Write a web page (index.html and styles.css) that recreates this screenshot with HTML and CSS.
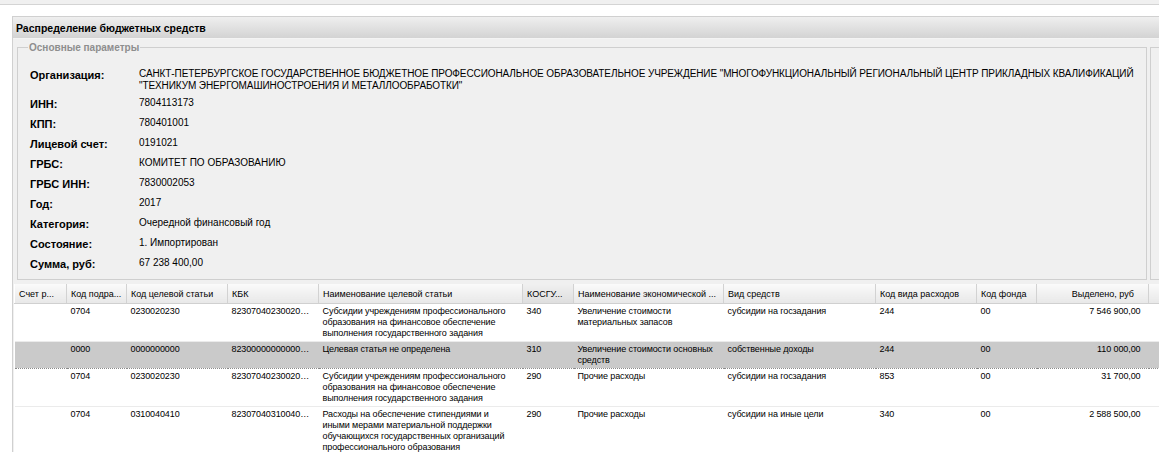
FILE: index.html
```html
<!DOCTYPE html>
<html lang="ru">

<head>
    <meta charset="UTF-8">
    <title>Распределение бюджетных средств</title>
    <link rel="stylesheet" href="styles.css">
</head>

<body>
    <div class="topbar"></div>
    <div class="workspace">
        <div class="panel">
            <div class="panel-header">Распределение бюджетных средств</div>
            <div class="panel-body">
                <div class="params">
                    <fieldset class="params-box">
                        <legend>Основные параметры</legend>
                        <div class="param param-wide">
                            <span class="param-label">Организация:</span>
                            <span class="param-value org-name">САНКТ-ПЕТЕРБУРГСКОЕ ГОСУДАРСТВЕННОЕ БЮДЖЕТНОЕ ПРОФЕССИОНАЛЬНОЕ ОБРАЗОВАТЕЛЬНОЕ УЧРЕЖДЕНИЕ "МНОГОФУНКЦИОНАЛЬНЫЙ РЕГИОНАЛЬНЫЙ ЦЕНТР ПРИКЛАДНЫХ КВАЛИФИКАЦИЙ<br>"ТЕХНИКУМ ЭНЕРГОМАШИНОСТРОЕНИЯ И МЕТАЛЛООБРАБОТКИ"</span>
                        </div>
                        <div class="param">
                            <span class="param-label">ИНН:</span>
                            <span class="param-value">7804113173</span>
                        </div>
                        <div class="param">
                            <span class="param-label">КПП:</span>
                            <span class="param-value">780401001</span>
                        </div>
                        <div class="param">
                            <span class="param-label">Лицевой счет:</span>
                            <span class="param-value">0191021</span>
                        </div>
                        <div class="param">
                            <span class="param-label">ГРБС:</span>
                            <span class="param-value">КОМИТЕТ ПО ОБРАЗОВАНИЮ</span>
                        </div>
                        <div class="param">
                            <span class="param-label">ГРБС ИНН:</span>
                            <span class="param-value">7830002053</span>
                        </div>
                        <div class="param">
                            <span class="param-label">Год:</span>
                            <span class="param-value">2017</span>
                        </div>
                        <div class="param">
                            <span class="param-label">Категория:</span>
                            <span class="param-value">Очередной финансовый год</span>
                        </div>
                        <div class="param">
                            <span class="param-label">Состояние:</span>
                            <span class="param-value">1. Импортирован</span>
                        </div>
                        <div class="param">
                            <span class="param-label">Сумма, руб:</span>
                            <span class="param-value">67 238 400,00</span>
                        </div>
                    </fieldset>
                    <div class="side-box"></div>
                </div>

                <table class="grid">
                    <colgroup>
                        <col style="width: 52px">
                        <col style="width: 60px">
                        <col style="width: 101px">
                        <col style="width: 91px">
                        <col style="width: 204px">
                        <col style="width: 51px">
                        <col style="width: 150px">
                        <col style="width: 152px">
                        <col style="width: 101px">
                        <col style="width: 60px">
                        <col style="width: 112px">
                        <col>
                    </colgroup>
                    <thead>
                        <tr>
                            <th>Счет р...</th>
                            <th>Код подра...</th>
                            <th>Код целевой статьи</th>
                            <th>КБК</th>
                            <th>Наименование целевой статьи</th>
                            <th class="sorted">КОСГУ...</th>
                            <th>Наименование экономической ...</th>
                            <th>Вид средств</th>
                            <th>Код вида расходов</th>
                            <th>Код фонда</th>
                            <th class="num">Выделено, руб</th>
                            <th></th>
                        </tr>
                    </thead>
                    <tbody>
                        <tr>
                            <td></td>
                            <td>0704</td>
                            <td>0230020230</td>
                            <td>82307040230020…</td>
                            <td>Субсидии учреждениям профессионального<br>образования на финансовое обеспечение<br>выполнения государственного задания</td>
                            <td>340</td>
                            <td>Увеличение стоимости<br>материальных запасов</td>
                            <td>субсидии на госзадания</td>
                            <td>244</td>
                            <td>00</td>
                            <td class="num">7 546 900,00</td>
                            <td></td>
                        </tr>
                        <tr class="selected">
                            <td></td>
                            <td>0000</td>
                            <td>0000000000</td>
                            <td>82300000000000…</td>
                            <td>Целевая статья не определена</td>
                            <td>310</td>
                            <td>Увеличение стоимости основных<br>средств</td>
                            <td>собственные доходы</td>
                            <td>244</td>
                            <td>00</td>
                            <td class="num">110 000,00</td>
                            <td></td>
                        </tr>
                        <tr>
                            <td></td>
                            <td>0704</td>
                            <td>0230020230</td>
                            <td>82307040230020…</td>
                            <td>Субсидии учреждениям профессионального<br>образования на финансовое обеспечение<br>выполнения государственного задания</td>
                            <td>290</td>
                            <td>Прочие расходы</td>
                            <td>субсидии на госзадания</td>
                            <td>853</td>
                            <td>00</td>
                            <td class="num">31 700,00</td>
                            <td></td>
                        </tr>
                        <tr>
                            <td></td>
                            <td>0704</td>
                            <td>0310040410</td>
                            <td>82307040310040…</td>
                            <td>Расходы на обеспечение стипендиями и<br>иными мерами материальной поддержки<br>обучающихся государственных организаций<br>профессионального образования</td>
                            <td>290</td>
                            <td>Прочие расходы</td>
                            <td>субсидии на иные цели</td>
                            <td>340</td>
                            <td>00</td>
                            <td class="num">2 588 500,00</td>
                            <td></td>
                        </tr>
                    </tbody>
                </table>
            </div>
        </div>
    </div>
</body>

</html>
```

FILE: styles.css
```css
body {
    margin: 0;
    background-color: #fff;
    font-family: "Liberation Sans", Arial, sans-serif;
    font-size: 11px;
    color: #000;
    overflow: hidden;
}

.topbar {
    height: 4px;
    background-color: #f0f0f0;
    border-bottom: 1px solid #d4d4d4;
}

.workspace {
    padding: 11px 0 0 12px;
}

.panel {
    border-top: 1px solid #d0d0d0;
    border-left: 1px solid #d0d0d0;
    background-color: #f0f0f0;
    height: 500px;
}

.panel-header {
    height: 21px;
    line-height: 22px;
    padding-left: 3px;
    font-size: 10.5px;
    font-weight: bold;
    background: linear-gradient(to bottom, #efefef, #d3d3d3);
    border-bottom: 1px solid #f4f4f4;
}

.panel-body {
    padding: 2px 0 0 0;
}

.params {
    display: flex;
    gap: 3px;
    margin-left: 4px;
}

.params-box {
    width: 1104px;
    margin: 0;
    padding: 12px 12px 6px 12px;
    border: 1px solid #cfcfcf;
    min-width: 0;
}

.params-box legend {
    margin-left: -2px;
    padding: 0 1px;
    line-height: 13px;
    font-size: 10px;
    font-weight: bold;
    color: #8e8e8e;
}

.side-box {
    flex: 1;
    margin-top: 6px;
    border: 1px solid #cfcfcf;
    border-right: none;
}

.param {
    display: flex;
    padding: 4px 0;
    line-height: 12px;
}

.param-wide {
    padding: 2px 0 1px 0;
}

.param-label {
    width: 109px;
    flex-shrink: 0;
    padding-top: 1px;
    margin-bottom: -1px;
    font-weight: bold;
}

.param-value {
    font-size: 10px;
}

.org-name {
    white-space: nowrap;
    letter-spacing: -0.1px;
}

/* таблица */
.grid {
    margin: 4px 0 0 1px;
    width: 1160px;
    table-layout: fixed;
    border-collapse: collapse;
    background-color: #fff;
    font-size: 9px;
}

.grid th {
    height: 19px;
    padding: 0 4px;
    text-align: left;
    font-weight: normal;
    white-space: nowrap;
    overflow: hidden;
    background: linear-gradient(to bottom, #fafafa, #e8e8e8);
    border-right: 1px solid #d2d2d2;
    border-left: 1px solid #fff;
    border-bottom: 1px solid #d0d0d0;
}

.grid th.sorted {
    background: linear-gradient(to bottom, #f0f0f0, #dedede);
}

.grid th.num {
    text-align: right;
    padding-right: 14px;
}

.grid td {
    padding: 2px 4px 2px 4px;
    line-height: 11px;
    letter-spacing: -0.1px;
    vertical-align: top;
    white-space: nowrap;
    overflow: hidden;
    text-overflow: ellipsis;
    border-bottom: 1px solid #ebebeb;
}

.grid td.num {
    text-align: right;
    padding-right: 8px;
}

.grid tr.selected td {
    background-color: #cacaca;
    border-top: 1px dotted #8a8a8a;
    border-bottom: 1px dotted #8a8a8a;
}
```
